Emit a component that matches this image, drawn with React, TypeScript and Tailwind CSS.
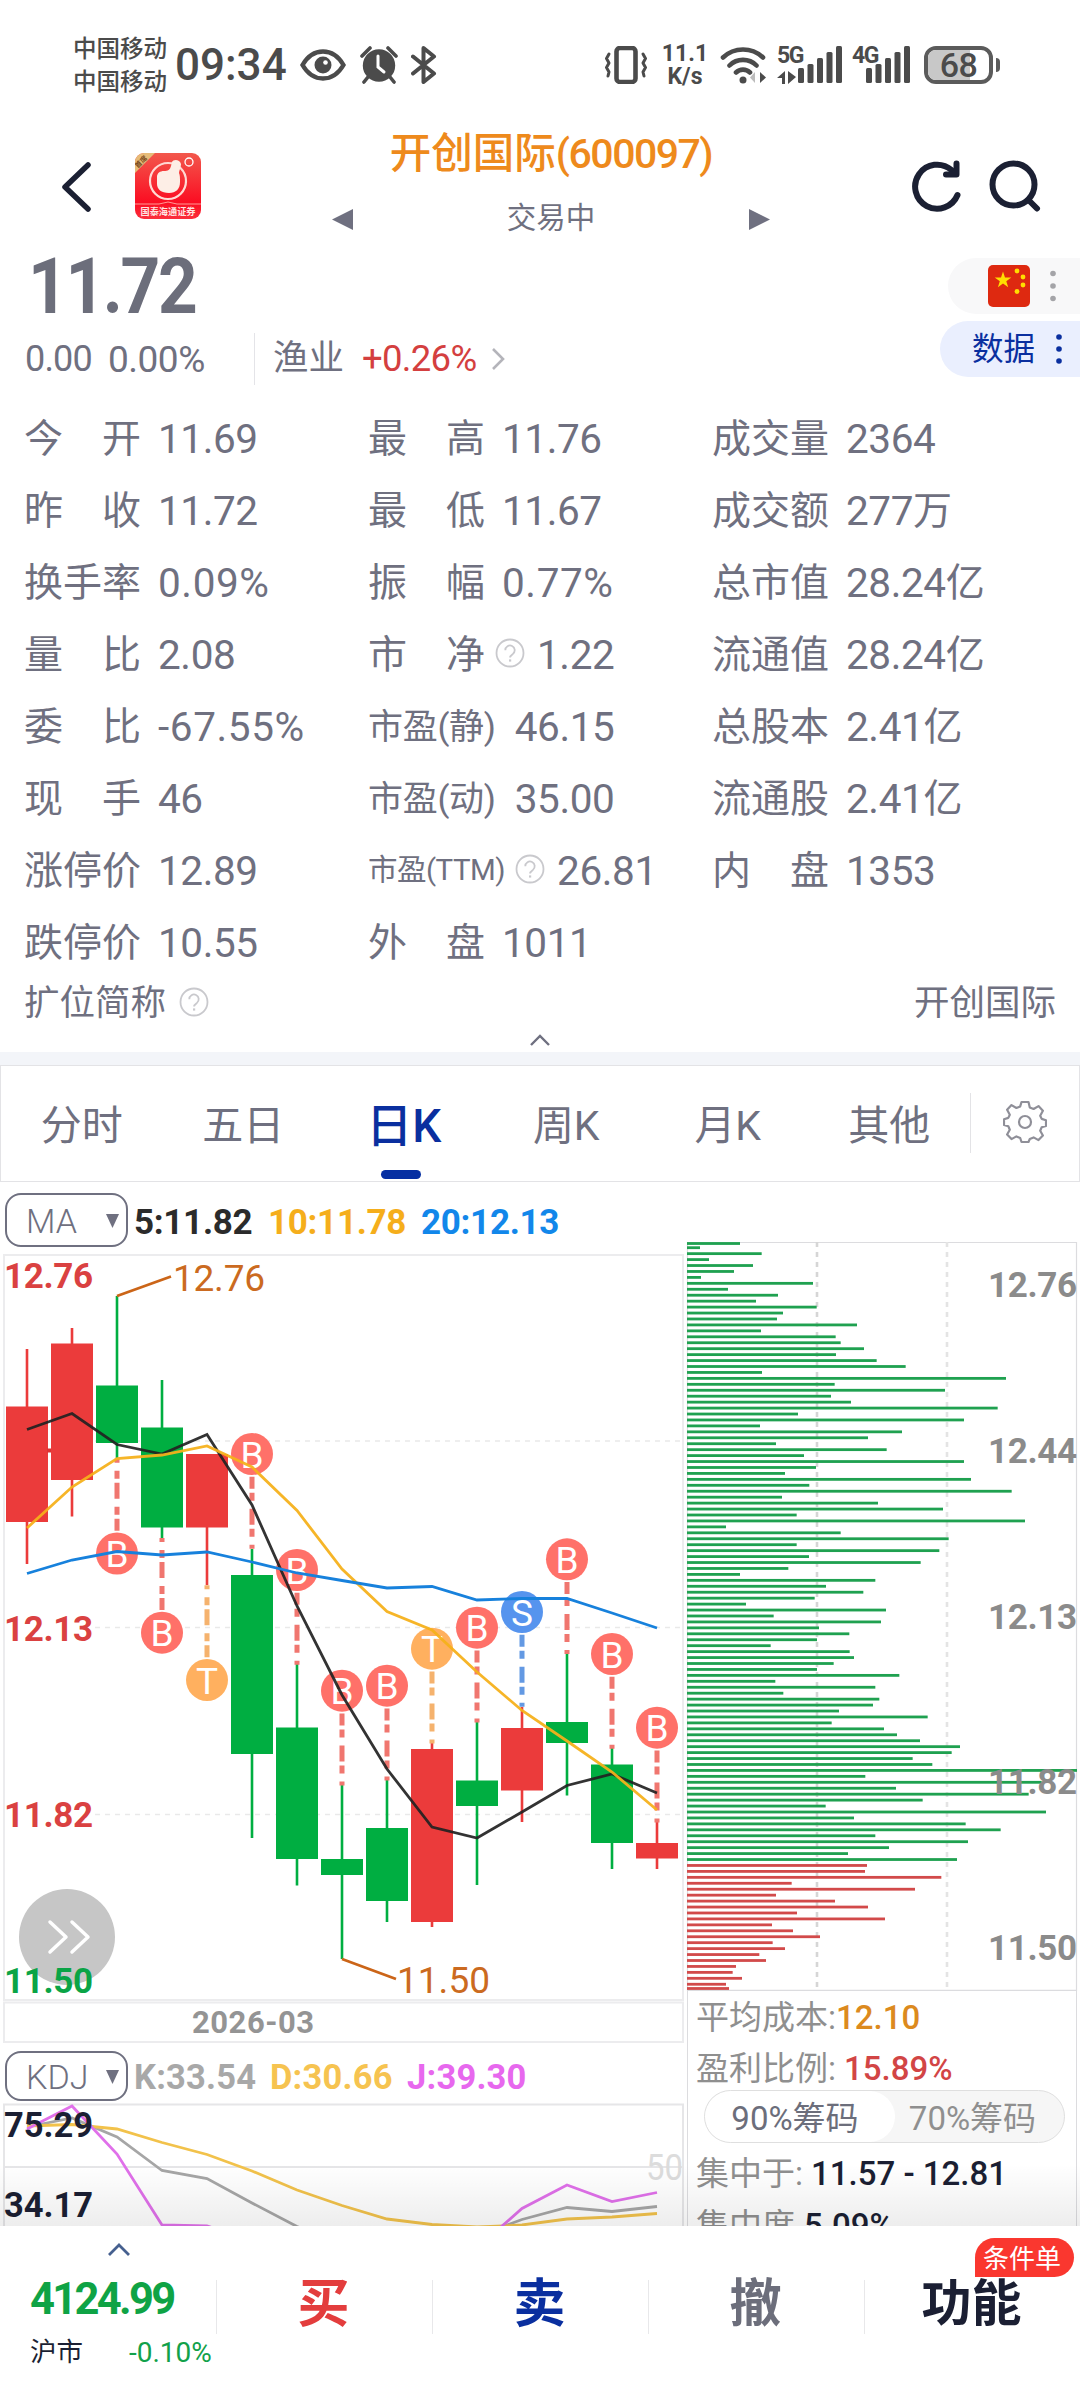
import clsx from 'clsx';

interface Quote {
  label: string;
  value: string;
  size?: 'md' | 'sm' | 'xs';
  unit?: string;
  help?: boolean;
}

interface Candle {
  high: number;
  top: number;
  bottom: number;
  low: number;
  up: boolean;
}

interface Signal {
  index: number;
  y: number;
  kind: 'B' | 'S' | 'T';
  below?: boolean;
}

const QUOTES: (Quote | null)[] = [
  { label: '今开', value: '11.69' },
  { label: '最高', value: '11.76' },
  { label: '成交量', value: '2364' },
  { label: '昨收', value: '11.72' },
  { label: '最低', value: '11.67' },
  { label: '成交额', value: '277', unit: '万' },
  { label: '换手率', value: '0.09%' },
  { label: '振幅', value: '0.77%' },
  { label: '总市值', value: '28.24', unit: '亿' },
  { label: '量比', value: '2.08' },
  { label: '市净', value: '1.22', help: true },
  { label: '流通值', value: '28.24', unit: '亿' },
  { label: '委比', value: '-67.55%' },
  { label: '市盈(静)', value: '46.15', size: 'sm' },
  { label: '总股本', value: '2.41', unit: '亿' },
  { label: '现手', value: '46' },
  { label: '市盈(动)', value: '35.00', size: 'sm' },
  { label: '流通股', value: '2.41', unit: '亿' },
  { label: '涨停价', value: '12.89' },
  { label: '市盈(TTM)', value: '26.81', size: 'xs', help: true },
  { label: '内盘', value: '1353' },
  { label: '跌停价', value: '10.55' },
  { label: '外盘', value: '1011' },
  null,
];

const TABS = ['分时', '五日', '日K', '周K', '月K', '其他'];

const CANDLES: Candle[] = [
  { high: 1349, top: 1406.5, bottom: 1522, low: 1564, up: true },
  { high: 1328, top: 1343.5, bottom: 1480, low: 1516.5, up: true },
  { high: 1296, top: 1385.5, bottom: 1443, low: 1458, up: false },
  { high: 1380, top: 1427.5, bottom: 1527.5, low: 1538, up: false },
  { high: 1454, top: 1454, bottom: 1527.5, low: 1585, up: true },
  { high: 1549, top: 1575, bottom: 1754, low: 1838, up: false },
  { high: 1664, top: 1727.5, bottom: 1859, low: 1885.5, up: false },
  { high: 1785, top: 1859, bottom: 1875, low: 1959, up: false },
  { high: 1780, top: 1828, bottom: 1901, low: 1922, up: false },
  { high: 1743, top: 1749, bottom: 1922, low: 1927, up: true },
  { high: 1722, top: 1780.5, bottom: 1806, low: 1885, up: false },
  { high: 1707, top: 1728, bottom: 1790.5, low: 1822, up: true },
  { high: 1654, top: 1722, bottom: 1743, low: 1795.5, up: false },
  { high: 1748, top: 1764.5, bottom: 1843, low: 1869, up: false },
  { high: 1822, top: 1843, bottom: 1858.5, low: 1869, up: true },
];

const SIGNALS: Signal[] = [
  { index: 2, y: 1553.5, kind: 'B', below: true },
  { index: 3, y: 1632.7, kind: 'B', below: true },
  { index: 4, y: 1680, kind: 'T', below: true },
  { index: 5, y: 1454, kind: 'B' },
  { index: 6, y: 1570, kind: 'B' },
  { index: 7, y: 1690.7, kind: 'B' },
  { index: 8, y: 1685.7, kind: 'B' },
  { index: 9, y: 1648.7, kind: 'T' },
  { index: 10, y: 1627.7, kind: 'B' },
  { index: 11, y: 1612, kind: 'S' },
  { index: 12, y: 1559.3, kind: 'B' },
  { index: 13, y: 1654, kind: 'B' },
  { index: 14, y: 1727.7, kind: 'B' },
];

const SIGNAL_COLORS = { B: '#ff7169', S: '#5694ee', T: '#ffb05f' };
const SIGNAL_DASHES = { B: '#f0766f', S: '#6399e3', T: '#f5b26d' };

const MA5 = [1429.5, 1413.5, 1444.5, 1454, 1434.5, 1505, 1606, 1695, 1769, 1827, 1838, 1812, 1785.5, 1774, 1793];
const MA10 = [1528, 1487, 1458.5, 1455, 1446, 1467, 1510.5, 1569, 1611.5, 1630, 1672, 1710.5, 1741, 1772, 1810];
const MA20 = [1573.5, 1560, 1551.5, 1555, 1552, 1562, 1573, 1580.5, 1588, 1586.5, 1600, 1598.5, 1598.5, 1613, 1628];

const LINE_K = [2127, 2118, 2137, 2170.5, 2178.5, 2203, 2226.5, 2245, 2255, 2255, 2236, 2219.5, 2207.5, 2211.5, 2206.5];
const LINE_D = [2126, 2124.5, 2129, 2142.5, 2154.5, 2171, 2190, 2205.5, 2219, 2224.5, 2227, 2225, 2219, 2217, 2213.5];
const LINE_J = [2129, 2106, 2154, 2225, 2226, 2240, 2260, 2270, 2270, 2260, 2248, 2208.5, 2185, 2201.5, 2192.5];

// chip distribution, bar length per price level in thirds of a pixel
const CHIPS_LOSS = [
  159, 39, 224, 66, 198, 141, 42, 378, 123, 273, 207, 389, 288, 270, 510, 222, 446, 461, 531, 447, 569, 656, 225, 957,
  443, 774, 432, 492, 932, 333, 831, 219, 645, 543, 267, 599, 351, 831, 387, 294, 852, 367, 974, 285, 573, 768, 329,
  1014, 117, 461, 785, 329, 757, 366, 701, 304, 159, 565, 417, 529, 383, 177, 597, 260, 582, 396, 487, 390, 251, 488,
  501, 440, 390, 637, 265, 565, 289, 577, 558, 456, 722, 434, 591, 630, 699, 819, 794, 677, 736, 1170, 535, 1064, 627,
  1025, 707, 416, 1077, 501, 836, 941, 565, 843, 606, 483, 810,
];
const CHIPS_GAIN = [
  540, 534, 763, 314, 684, 267, 444, 543, 330, 594, 255, 318, 399, 257, 294, 217, 237, 147, 137, 165, 117, 126,
];

const xAt = (i: number) => 27 + i * 45;
const toPoints = (ys: number[]) => ys.map((y, i) => `${xAt(i)},${y}`).join(' ');

function chipY(i: number) {
  if (i === 0) return 1243.5;
  if (i === CHIPS_LOSS.length + CHIPS_GAIN.length - 1) return 1988.5;
  return 1247.7 + (i - 1) * 5.94;
}

function HelpIcon({ className }: { className?: string }) {
  return (
    <svg viewBox="0 0 30 30" className={clsx('h-[30px] w-[30px] shrink-0', className)} fill="none" stroke="#c9c9cd" strokeWidth="1.8">
      <circle cx="15" cy="15" r="13.5" />
      <path d="M10.3 12.2a4.7 4.7 0 1 1 7.6 3.7c-1.8 1.3-2.8 1.9-2.8 3.6" />
      <path d="M15.1 21.4v2.2" strokeWidth="2.2" />
    </svg>
  );
}

function SignalBars({ className }: { className?: string }) {
  return (
    <svg viewBox="0 0 44 38" className={clsx('h-[38px] w-[44px]', className)} fill="#4b4b4b">
      <rect x="0" y="22" width="6" height="15" rx="1.5" />
      <rect x="9.5" y="18" width="6" height="19" rx="1.5" />
      <rect x="19" y="12" width="6" height="25" rx="1.5" />
      <rect x="28.5" y="6" width="6" height="31" rx="1.5" />
      <rect x="38" y="0" width="6" height="37" rx="1.5" />
    </svg>
  );
}

function StatusBar() {
  return (
    <div className="flex h-[110px] items-center pt-[20px] pl-[73px] text-[#4b4b4b]">
      <div className="w-[102px] pt-[2px] text-[23.5px] leading-[33px] font-medium">
        <div>中国移动</div>
        <div>中国移动</div>
      </div>
      <div className="w-[125px] text-[44px] leading-none font-medium">09:34</div>
      <svg viewBox="0 0 46 32" className="h-[32px] w-[46px]" fill="none" stroke="#4b4b4b" strokeWidth="4.4">
        <path d="M2.5 16C8 6.500 15 2.500 23 2.500S38 6.500 43.500 16C38 25.500 31 29.500 23 29.500S8 25.500 2.500 16z" />
        <circle cx="23" cy="16" r="8.500" fill="#4b4b4b" stroke="none" />
        <circle cx="25.500" cy="13.500" r="2.300" fill="#fff" stroke="none" />
      </svg>
      <svg viewBox="0 0 38 38" className="ml-[14px] h-[38px] w-[38px]" fill="#4b4b4b">
        <circle cx="19" cy="19.500" r="16.200" />
        <path d="M2 10 10 2M36 10 28 2M8 31l-4 5M30 31l4 5" stroke="#4b4b4b" strokeWidth="3.600" strokeLinecap="round" />
        <path d="M18 10v11l6 5" fill="none" stroke="#fff" strokeWidth="3" strokeLinecap="round" />
      </svg>
      <svg viewBox="0 0 26 38" className="ml-[13px] h-[38px] w-[26px]" fill="none" stroke="#4b4b4b" strokeWidth="4" strokeLinejoin="round" strokeLinecap="round">
        <path d="M2 10.500 23 27.500 12.500 36V2L23 10.500 2 27.500" />
      </svg>
      <svg viewBox="0 0 44 38" className="ml-[167px] h-[38px] w-[44px]" fill="none" stroke="#4b4b4b" strokeWidth="3.600" strokeLinecap="round" strokeLinejoin="round">
        <rect x="12.500" y="2" width="19" height="34" rx="3.500" strokeWidth="4.600" />
        <path d="M5 8l-2.500 4.500L5 17l-2.500 4.500L5 26l-1 4M39 8l2.500 4.500L39 17l2.500 4.500L39 26l1 4" strokeWidth="3" />
      </svg>
      <div className="ml-[9px] w-[56px] text-center text-[23px] leading-[23px] font-bold">
        <div>11.1</div>
        <div>K/s</div>
      </div>
      <svg viewBox="0 0 48 38" className="ml-[7px] h-[38px] w-[48px]" fill="none" stroke="#4b4b4b" strokeWidth="4.600" strokeLinecap="round">
        <path d="M3 11.500a29 29 0 0 1 40 0M9.500 19.500a19 19 0 0 1 27 0M16 26.500a10 10 0 0 1 14 0" />
        <circle cx="23" cy="34" r="3.500" fill="#4b4b4b" stroke="none" />
        <path d="M35 26v11l-5-5.500z" fill="#bdbdbd" stroke="none" />
        <path d="M40 26v11l6-5.500z" fill="#4b4b4b" stroke="none" />
      </svg>
      <div className="relative ml-[9px] h-[38px] w-[65px]">
        <span className="absolute top-[1px] left-0 text-[23px] leading-[18px] font-bold tracking-[-1.5px]">5G</span>
        <SignalBars className="absolute right-0" />
        <svg viewBox="0 0 20 13" className="absolute bottom-0 left-0 h-[13px] w-[20px]" fill="#4b4b4b">
          <path d="M8 0v13H5V7H0zM11 0v13l8-7z" />
        </svg>
      </div>
      <div className="relative ml-[10px] h-[38px] w-[58px]">
        <span className="absolute top-[1px] left-0 text-[23px] leading-[18px] font-bold tracking-[-1.5px]">4G</span>
        <SignalBars className="absolute right-0" />
      </div>
      <div className="relative ml-[14px] flex h-[38px] w-[69px] items-center justify-center overflow-hidden rounded-[12px] border-[4px] border-[#5b5b5b] bg-white">
        <div className="absolute inset-y-0 left-0 w-[42px] bg-[#c8c8c8]" />
        <span className="relative text-[34px] leading-none font-medium tracking-[-0.5px]">68</span>
      </div>
      <div className="ml-[3px] h-[14px] w-[4px] rounded-r-full bg-[#5b5b5b]" />
    </div>
  );
}

function BrokerLogo() {
  return (
    <svg viewBox="0 0 66 66" className="h-[66px] w-[66px]">
      <defs>
        <linearGradient id="broker" x1="0" y1="0" x2="0" y2="1">
          <stop offset="0" stopColor="#f2584c" />
          <stop offset="0.75" stopColor="#fb0d22" />
          <stop offset="1" stopColor="#fb2f3c" />
        </linearGradient>
        <clipPath id="brokerClip">
          <rect width="66" height="66" rx="9" />
        </clipPath>
      </defs>
      <g clipPath="url(#brokerClip)">
        <rect width="66" height="66" fill="url(#broker)" />
        <path d="M0 0h20L0 20z" fill="#e6bb78" />
        <text x="-1" y="5" transform="rotate(-45) translate(-8 8)" fontSize="7" fontWeight="700" fill="#7a4a1c">
          首席
        </text>
        <circle cx="33" cy="28" r="18" fill="none" stroke="#ffd9d3" strokeWidth="2.200" />
        <path d="M22 24c0-4 3-6 7-6 4 0 6-1 7-5l1-4c1-3 8-3 9 2 0 4-2 6-2 9 1 2 1 5 1 9 0 7-4 11-11 11-8 0-12-4-12-9z" fill="#fdeee6" />
        <circle cx="54" cy="9" r="4" fill="none" stroke="#fff" strokeWidth="1.300" />
        <path d="M0 51h24l9-2 9 2h24" stroke="#ff9a94" strokeWidth="1" fill="none" />
        <text x="5.500" y="62" fontSize="9.200" fontWeight="700" fill="#ffe5e2" textLength="55" lengthAdjust="spacingAndGlyphs">
          国泰海通证券
        </text>
      </g>
    </svg>
  );
}

function Header() {
  return (
    <div className="flex h-[130px] pl-[60px]">
      <svg viewBox="0 0 32 50" className="mt-[52px] h-[50px] w-[32px]" fill="none" stroke="#1b2033" strokeWidth="5.500" strokeLinecap="round" strokeLinejoin="round">
        <path d="M28 3 5 25l23 22" />
      </svg>
      <div className="mt-[43px] ml-[43px]">
        <BrokerLogo />
      </div>
      <div className="ml-[131px] w-[438px]">
        <div className="mt-[22px] flex h-[44px] items-center justify-center text-[41.500px] leading-none text-[#ee8a1c]">
          <span className="font-medium">开创国际</span>
          <span className="text-[41px] font-medium tracking-[-1.5px]">(600097)</span>
        </div>
        <div className="mt-[22px] flex h-[42px] items-center justify-between text-[29.5px] leading-none text-[#6f7080]">
          <svg viewBox="0 0 21 21" className="h-[21px] w-[21px]">
            <path d="M21 0v21L0 10.500z" fill="#6f7080" />
          </svg>
          <span>交易中</span>
          <svg viewBox="0 0 21 21" className="h-[21px] w-[21px]">
            <path d="M0 0v21l21-10.500z" fill="#6f7080" />
          </svg>
        </div>
      </div>
      <svg viewBox="0 0 52 54" className="mt-[49px] ml-[140px] h-[54px] w-[52px]" fill="none" stroke="#1b2033" strokeWidth="6" strokeLinecap="round">
        <path d="M47.500 36A22 22 0 1 1 41.500 11" />
        <path d="M46.500 4.500V15.500H36" strokeLinejoin="round" />
      </svg>
      <svg viewBox="0 0 52 54" className="mt-[50px] ml-[27px] h-[54px] w-[52px]" fill="none" stroke="#1b2033" strokeWidth="6" strokeLinecap="round">
        <circle cx="24.500" cy="24.500" r="21" />
        <path d="M39.500 40 48 48.500" />
      </svg>
    </div>
  );
}

function Dots({ color, gap }: { color: string; gap: number }) {
  return (
    <svg viewBox="0 0 8 34" className="h-[34px] w-[8px]" fill={color}>
      <circle cx="4" cy={17 - gap} r="2.800" />
      <circle cx="4" cy="17" r="2.800" />
      <circle cx="4" cy={17 + gap} r="2.800" />
    </svg>
  );
}

function PriceBlock() {
  return (
    <div className="flex h-[162px] justify-between">
      <div className="pl-[25px]">
        <div className="mt-[9px] ml-[3px] h-[76px] w-[200px] origin-left scale-x-90 text-[77px] leading-[76px] font-bold tracking-[-2.6px] text-[#6c6e7b]">
          11.72
        </div>
        <div className="flex h-[66px] items-center pt-[2px] leading-none text-[#6f7080]">
          <span className="w-[83px] text-[36px] tracking-[-0.8px]">0.00</span>
          <span className="w-[146px] text-[37px] tracking-[-0.5px]">0.00%</span>
          <span className="h-[52px] w-px bg-[#e4e4e8]" />
          <span className="ml-[18px] text-[35.500px]">渔业</span>
          <span className="ml-[18px] text-[36.500px] tracking-[-0.7px] text-[#d43f3f]">+0.26%</span>
          <svg viewBox="0 0 14 22" className="ml-[15px] h-[22px] w-[14px]" fill="none" stroke="#b4b4ba" strokeWidth="2.600">
            <path d="m2 1 10 10L2 21" />
          </svg>
        </div>
      </div>
      <div className="flex flex-col items-end pt-[18px]">
        <div className="flex h-[56px] w-[132px] items-center rounded-l-full bg-[#f8f8f9] pl-[40px]">
          <svg viewBox="0 0 42 42" className="mt-[-1px] h-[42px] w-[42px]">
            <rect width="42" height="42" rx="5" fill="#de2910" />
            <path d="m15 6.500 2 6h6.300l-5 3.700 1.900 6-5.200-3.700-5.100 3.700 1.900-6-5.100-3.700H13z" fill="#ffde00" />
            <g fill="#ffde00">
              <circle cx="29" cy="6" r="2.400" />
              <circle cx="35" cy="12" r="2.400" />
              <circle cx="35" cy="20" r="2.400" />
              <circle cx="29" cy="26.500" r="2.400" />
            </g>
          </svg>
          <span className="ml-[19px]">
            <Dots color="#a4a4a8" gap={12.5} />
          </span>
        </div>
        <div className="mt-[7px] flex h-[56px] w-[140px] items-center rounded-l-full bg-[#eaeffe] pl-[32px]">
          <span className="pt-[2px] text-[31.500px] leading-none text-[#0a2f9f]">数据</span>
          <span className="ml-[20px]">
            <Dots color="#0a2f9f" gap={12} />
          </span>
        </div>
      </div>
    </div>
  );
}

function QuoteCell({ quote }: { quote: Quote }) {
  const size = quote.size ?? 'md';
  return (
    <div className="flex h-[72px] items-center pt-[2px] leading-none">
      <span
        className={clsx(
          'shrink-0',
          size === 'md' && 'flex w-[117px] justify-between text-[39px]',
          size === 'sm' && 'mr-[2px] text-[35px] tracking-[-0.3px]',
          size === 'xs' && 'text-[29.500px] tracking-[-0.5px]',
        )}
      >
        {size === 'md' ? quote.label.split('').map((c) => <span key={c}>{c}</span>) : quote.label}
      </span>
      {quote.help && <HelpIcon className={size === 'md' ? 'mt-[-4px] ml-[10px]' : 'mt-[-4px] ml-[10px]'} />}
      <span className={clsx('pt-px text-[40.500px]', quote.help ? 'ml-[12px]' : 'ml-[17px]', quote.value.includes('%') ? 'tracking-[0.6px]' : 'tracking-[-0.4px]')}>
        {quote.value}
      </span>
      {quote.unit && <span className="text-[39px]">{quote.unit}</span>}
    </div>
  );
}

function QuoteGrid() {
  return (
    <div className="text-[#6f7080]">
      <div className="grid grid-cols-[344px_344px_1fr] pl-[24px]">
        {QUOTES.map((q, i) => (q ? <QuoteCell key={q.label} quote={q} /> : <div key={i} />))}
      </div>
      <div className="flex h-[50px] items-center justify-between px-[24px] pt-[2px] text-[35.500px] leading-none">
        <span className="flex items-center">
          扩位简称
          <HelpIcon className="mt-[-4px] ml-[13px]" />
        </span>
        <span>开创国际</span>
      </div>
      <div className="flex h-[24px] justify-center pt-[6px]">
        <svg viewBox="0 0 20 12" className="h-[12px] w-[20px]" fill="none" stroke="#6f7080" strokeWidth="2.400">
          <path d="m1 11 9-9 9 9" />
        </svg>
      </div>
    </div>
  );
}

function Gear() {
  return (
    <svg viewBox="0 0 44 44" className="h-[44px] w-[44px]" fill="none" stroke="#8f8f98" strokeWidth="2.200" strokeLinejoin="round">
      <path d="M18.500 2h7l1.300 5.400 3.800 1.600 4.900-2.900 4.400 4.700-2.700 4.900 1.500 3.200 4.300 1.300v5.700l-4.300 1.400-1.500 3.500 2.700 4.700-4.400 4.600-4.900-2.700-3.800 1.600L25.500 42h-7l-1.300-4-3.800-1.600-4.900 2.700-4.400-4.600 2.700-4.700-1.500-3.500L1 24.900v-5.700l4.300-1.300 1.500-3.200-2.700-4.900 4.400-4.700 4.900 2.900 3.800-1.600z" />
      <circle cx="22" cy="22" r="6" />
    </svg>
  );
}

function PeriodTabs() {
  return (
    <div className="flex h-[117px] border border-[#e3e3e6]">
      {TABS.map((tab) => {
        const active = tab === '日K';
        return (
          <div key={tab} className={clsx('relative flex w-[161.500px] items-center justify-center pt-[5px] leading-none', active ? 'pr-[2px] text-[46px] font-medium text-[#0a2f9f]' : 'text-[41px] text-[#6f7080]')}>
            {tab}
            {active && <span className="absolute bottom-[2px] left-[57px] h-[9px] w-[40px] rounded-full bg-[#052fa2]" />}
          </div>
        );
      })}
      <div className="mt-[27px] h-[60px] w-px bg-[#e3e3e6]" />
      <div className="flex flex-1 items-center justify-center pb-[3px]">
        <Gear />
      </div>
    </div>
  );
}

function IndicatorSelect({ name }: { name: string }) {
  return (
    <div className="flex h-full w-[123px] items-center justify-between rounded-[16px] border-2 border-[#6f7080] pt-[3px] pr-[7px] pl-[19px] text-[34px] leading-none font-light text-[#6f7080]">
      <span>{name}</span>
      <svg viewBox="0 0 13 14" className="h-[14px] w-[13px]">
        <path d="M0 0h13L6.500 14z" fill="#6f7080" />
      </svg>
    </div>
  );
}

function KLineChart() {
  return (
    <svg viewBox="0 1252 686 792" className="block h-[792px] w-[686px]">
      <g fill="none" stroke="#ececee" strokeWidth="2">
        <rect x="4" y="1255" width="679" height="745" />
        <rect x="4" y="2002.500" width="679" height="39.500" />
      </g>
      <g stroke="#e9e9e9" strokeWidth="1.300" strokeDasharray="5 5">
        <path d="M95 1441H680M95 1627.500H680M95 1814.500H680" />
      </g>
      <circle cx="67" cy="1937" r="48" fill="#c6c6c6" />
      {CANDLES.map((c, i) => (
        <g key={i} fill={c.up ? '#eb3b3b' : '#00ae41'} stroke="none">
          <rect x={xAt(i) - 1.3} y={c.high} width="2.600" height={c.low - c.high} />
          <rect x={xAt(i) - 21} y={c.top} width="42" height={c.bottom - c.top} />
        </g>
      ))}
      <path d="M47 1450.500h4" stroke="#d33" strokeWidth="4" />
      {SIGNALS.map((s) => {
        const x = xAt(s.index);
        const dir = s.below ? -1 : 1;
        return (
          <g key={s.index}>
            <path
              d={`M${x} ${s.y + dir * 22.700}V${s.y + dir * 94.700}`}
              stroke={SIGNAL_DASHES[s.kind]}
              strokeWidth="5"
              strokeDasharray="12 4 8 8 16 4 8 8 4 20"
            />
            <circle cx={x} cy={s.y} r="21" fill={SIGNAL_COLORS[s.kind]} />
            <text x={x} y={s.y + 13.500} fontSize="37" fill="#fff" textAnchor="middle">
              {s.kind}
            </text>
          </g>
        );
      })}
      <g fill="none" strokeWidth="2.800">
        <polyline points={toPoints(MA5)} stroke="#222" strokeOpacity="0.920" />
        <polyline points={toPoints(MA10)} stroke="#f5b01b" strokeOpacity="0.940" />
        <polyline points={toPoints(MA20)} stroke="#1781dc" />
      </g>
      <g stroke="#cb6518" strokeWidth="2.800">
        <path d="M117 1296 171 1276.500M342 1959 396 1979" />
      </g>
      <g fontSize="37" fill="#cb6a20">
        <text x="173" y="1291" textLength="92">12.76</text>
        <text x="397" y="1993" textLength="93">11.50</text>
      </g>
      <g fontSize="35" fontWeight="700" fill="#da4141">
        <text x="4" y="1288" textLength="89">12.76</text>
        <text x="4" y="1640.500" textLength="89">12.13</text>
        <text x="4" y="1826.500" textLength="89">11.82</text>
        <text x="4" y="1992.500" textLength="89" fill="#0aa446">11.50</text>
      </g>
      <text x="192" y="2033" fontSize="31" fontWeight="700" fill="#949494" textLength="122">
        2026-03
      </text>
      <path d="m50 1922 16 15-16 15M72 1922l16 15-16 15" fill="none" stroke="#fff" strokeWidth="3.500" strokeLinecap="round" strokeLinejoin="round" />
    </svg>
  );
}

function KdjChart() {
  return (
    <svg viewBox="0 2103 686 123" className="block h-[123px] w-[686px]">
      <path d="M4 2226V2104.500H683V2226M4 2167H683" fill="none" stroke="#e6e6e8" strokeWidth="2" />
      <g fill="none" strokeWidth="2.800">
        <polyline points={toPoints(LINE_K)} stroke="#a6a6a6" />
        <polyline points={toPoints(LINE_D)} stroke="#f2c24b" />
        <polyline points={toPoints(LINE_J)} stroke="#e070ea" />
      </g>
      <text x="646" y="2180" fontSize="36" fill="#dcdcdc" textLength="37" lengthAdjust="spacingAndGlyphs">
        50
      </text>
      <g fontSize="34.500" fontWeight="700" fill="#1b1f33">
        <text x="4" y="2137" textLength="89">75.29</text>
        <text x="4" y="2217" textLength="89">34.17</text>
      </g>
    </svg>
  );
}

function ChipChart() {
  const chips = [...CHIPS_LOSS, ...CHIPS_GAIN];
  return (
    <svg viewBox="686 1182 394 809" className="block h-[809px] w-[394px] shrink-0">
      <path d="M687.500 1991V1242.500H1076.500V1991M687 1990.300H1077" fill="none" stroke="#dcdcdf" strokeWidth="1.200" />
      <path d="M817 1242V1990" stroke="#d6d6d6" strokeWidth="2.600" strokeDasharray="5 5" />
      <path d="M947 1242V1990" stroke="#e4e4e4" strokeWidth="2.600" strokeDasharray="5 5" />
      {chips.map((len, i) => (
        <rect key={i} x="687" y={chipY(i) - 1.4} width={len / 3} height="2.800" fill={i < CHIPS_LOSS.length ? '#1fa150' : '#d24a4a'} />
      ))}
      <g fontSize="35" fontWeight="700" fill="#8b8b8b">
        <text x="988" y="1296.500" textLength="89">12.76</text>
        <text x="988" y="1462.500" textLength="89">12.44</text>
        <text x="988" y="1629" textLength="89">12.13</text>
        <text x="988" y="1793.500" textLength="89">11.82</text>
        <text x="988" y="1960" textLength="89">11.50</text>
      </g>
    </svg>
  );
}

function ChipSummary() {
  return (
    <div className="mr-[3px] ml-px min-h-0 flex-1 overflow-hidden border-x border-[#dcdcdf] pl-[8px] text-[33px] leading-none text-[#8f8f8f]">
      <div className="flex h-[50px] items-center pt-[2px]">
        平均成本:<span className="font-medium text-[#dc8a1e]">12.10</span>
      </div>
      <div className="flex h-[49px] items-center pt-[5px]">
        盈利比例:<span className="ml-[8px] font-medium text-[#d24545]">15.89%</span>
      </div>
      <div className="ml-[8px] flex h-[53px] w-[361px] items-center overflow-hidden rounded-full border border-[#dfdfdf] bg-[#f6f6f6]">
        <div className="flex h-[51px] w-[190px] items-center justify-center rounded-full bg-white pr-[10px] pt-[3px] text-[#6c6e7b]">90%筹码</div>
        <div className="flex flex-1 items-center justify-center pt-[3px] pr-[14px]">70%筹码</div>
      </div>
      <div className="flex h-[57px] items-center pt-[4px]">
        集中于:<span className="ml-[8px] font-medium text-[#1b1f33]">11.57 - 12.81</span>
      </div>
      <div className="flex h-[51px] items-center">
        集中度<span className="ml-[9px] font-medium text-[#1b1f33]">5.09%</span>
      </div>
    </div>
  );
}

function BottomBar() {
  return (
    <div className="flex h-[162px] bg-white leading-none font-bold">
      <div className="relative w-[216px] pl-[30px]">
        <svg viewBox="0 0 22 13" className="mt-[17px] ml-[78px] h-[13px] w-[22px]" fill="none" stroke="#46608f" strokeWidth="2.800">
          <path d="m1 12 10-10 10 10" />
        </svg>
        <div className="mt-[22px] text-[43.500px] tracking-[-2.700px] text-[#0fa345]">4124.99</div>
        <div className="mt-[17px] flex items-center text-[26.500px] font-normal">
          <span className="text-[#1b1f33]">沪市</span>
          <span className="ml-[46px] text-[28px] tracking-[0px] text-[#12a14a]">-0.10%</span>
        </div>
      </div>
      {[
        { text: '买', color: 'text-[#e33d3d]' },
        { text: '卖', color: 'text-[#0a2f9f]' },
        { text: '撤', color: 'text-[#6c6e7b]' },
        { text: '功能', color: 'text-[#1b1f33]' },
      ].map(({ text, color }) => (
        <div key={text} className="relative flex flex-1 pt-[54px]">
          <span className="h-[54px] w-px bg-[#e8e8ea]" />
          <span className={clsx('mt-[-1px] mr-[2px] flex-1 text-center', color, text === '功能' ? 'text-[50px]' : 'text-[52px]')}>{text}</span>
          {text === '功能' && (
            <span className="absolute top-[12px] right-[6px] flex h-[39px] w-[99px] items-center justify-center rounded-[20px] rounded-bl-none bg-[#fa372f] pt-[2px] pr-[5px] text-[26px] font-normal text-white">
              条件单
            </span>
          )}
        </div>
      ))}
    </div>
  );
}

export default function App() {
  return (
    <div className="h-[2388px] w-[1080px] overflow-hidden bg-white font-['Roboto','Noto_Sans_CJK_SC',sans-serif]">
      <StatusBar />
      <Header />
      <PriceBlock />
      <QuoteGrid />
      <div className="h-[13px] bg-[#f3f5f9]" />
      <PeriodTabs />
      <div className="relative flex h-[1044px] overflow-hidden">
        <div className="w-[686px]">
          <div className="flex h-[70px] items-center pt-[5px] pl-[5px] text-[35px] leading-none font-bold">
            <div className="h-[54px]">
              <IndicatorSelect name="MA" />
            </div>
            <span className="ml-[6px] w-[134px] pt-[5px] tracking-[-0.3px] text-[#2b2b2b]">5:11.82</span>
            <span className="w-[153px] pt-[5px] tracking-[-0.3px] text-[#f5ae1b]">10:11.78</span>
            <span className="pt-[5px] tracking-[-0.3px] text-[#1287ea]">20:12.13</span>
          </div>
          <KLineChart />
          <div className="flex h-[59px] items-center pt-[6px] pb-[2px] pl-[5px] text-[34.500px] leading-none font-bold">
            <div className="h-[50px]">
              <IndicatorSelect name="KDJ" />
            </div>
            <span className="ml-[6px] w-[136px] pt-[4px] tracking-[0.2px] text-[#a8a8a8]">K:33.54</span>
            <span className="w-[137px] pt-[4px] tracking-[0.2px] text-[#f6c350]">D:30.66</span>
            <span className="pt-[4px] tracking-[0.2px] text-[#e768ee]">J:39.30</span>
          </div>
          <KdjChart />
        </div>
        <div className="flex w-[394px] flex-col">
          <ChipChart />
          <ChipSummary />
        </div>
        <div className="pointer-events-none absolute inset-x-0 bottom-0 h-[62px] bg-linear-to-b from-transparent to-black/7" />
      </div>
      <BottomBar />
    </div>
  );
}
